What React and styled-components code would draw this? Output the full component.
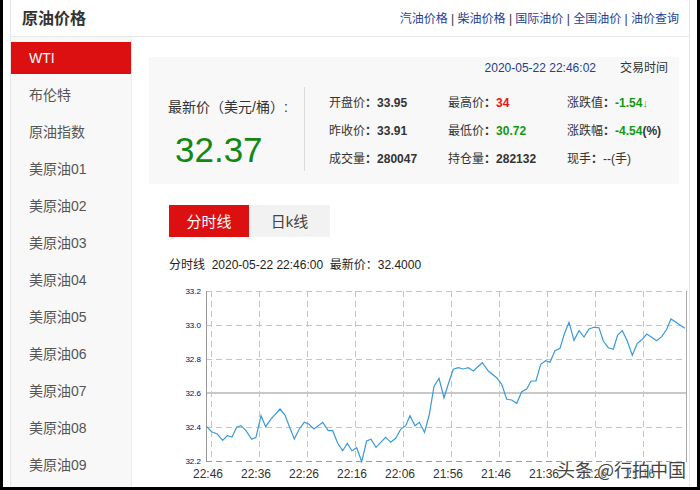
import React from 'react';
import styled, { createGlobalStyle } from 'styled-components';

const GlobalStyle = createGlobalStyle`
	html, body {
		margin: 0;
		padding: 0;
		background: #000;
	}
	body {
		font-family: "Liberation Sans", Arial, "Noto Sans CJK SC", sans-serif;
		color: #333;
	}
	* { box-sizing: border-box; }
`;

const Frame = styled.div`
	width: 700px;
	height: 490px;
	padding: 0 3px 3px 3px;
	background: #000;
`;

const Page = styled.div`
	height: 487px;
	background: #fff;
	padding: 0 7px;
	overflow: hidden;
`;

const Container = styled.div`
	width: 680px;
	height: 100%;
	border-left: 1px solid #e6e6e6;
	border-right: 1px solid #e6e6e6;
	display: flex;
	flex-direction: column;
`;

const Header = styled.div`
	height: 37px;
	border-bottom: 1px solid #e8e8e8;
	display: flex;
	align-items: center;
	justify-content: space-between;
	padding: 0 10px 2px 11px;
`;

const Title = styled.h2`
	margin: 0;
	font-size: 16px;
	font-weight: bold;
	color: #333;
`;

const Links = styled.div`
	font-size: 12px;
	color: #333;
	white-space: pre;
`;

const TopLink = styled.a`
	color: #1d3f95;
	text-decoration: none;
`;

const Body = styled.div`
	flex: 1;
	display: flex;
	min-height: 0;
`;

const Sidebar = styled.ul`
	list-style: none;
	margin: 0;
	padding: 5px 0 0;
	width: 121px;
	background: #f8f8f8;
	border-right: 1px solid #ececec;
	display: flex;
	flex-direction: column;
	gap: 5px;
`;

const SideItem = styled.li`
	height: 32px;
	line-height: 32px;
	padding-left: 18px;
	font-size: 14px;
	color: ${ props => props.$active ? '#fff' : '#555' };
	background: ${ props => props.$active ? '#dc1010' : 'transparent' };
`;

const Main = styled.div`
	flex: 1;
	display: flex;
	flex-direction: column;
	padding-top: 20px;
`;

const Summary = styled.div`
	margin: 0 10px 0 17px;
	height: 127px;
	background: #f8f8f8;
	padding: 3px 11px 13px 19px;
`;

const TimeRow = styled.div`
	display: flex;
	justify-content: flex-end;
	gap: 24px;
	font-size: 12px;
	line-height: 16px;
`;

const TimeStamp = styled.span`
	color: #1f3f8f;
`;

const SummaryBody = styled.div`
	margin-top: 11px;
	height: 84px;
	display: flex;
`;

const Latest = styled.div`
	width: 136px;
	display: flex;
	flex-direction: column;
	padding-top: 10px;
`;

const LatestLabel = styled.div`
	font-size: 14px;
	line-height: 20px;
	color: #333;
	white-space: nowrap;
`;

const LatestValue = styled.div`
	font-size: 35px;
	line-height: 40px;
	margin-top: 13px;
	padding-left: 7px;
	color: #118811;
`;

const Divider = styled.div`
	width: 1px;
	background: #dcdcdc;
`;

const Stats = styled.div`
	margin-left: 24px;
	display: grid;
	grid-template-columns: 119px 119px 1fr;
	grid-auto-rows: 28px;
	align-items: center;
	font-size: 12px;
`;

const Stat = styled.div`
	white-space: nowrap;
	color: #333;
`;

const StatValue = styled.b`
	color: ${ props => props.$tone === 'up' ? '#ee1111' : props.$tone === 'down' ? '#119911' : '#333' };
`;

const Arrow = styled.span`
	color: #33aa44;
	font-size: 11px;
`;

const Tabs = styled.div`
	display: flex;
	margin: 21px 0 0 37px;
`;

const Tab = styled.div`
	width: ${ props => props.$w }px;
	height: 32px;
	line-height: 33px;
	text-align: center;
	font-size: 15px;
	color: ${ props => props.$active ? '#fff' : '#444' };
	background: ${ props => props.$active ? '#dc1010' : '#f2f2f2' };
`;

const ChartTitle = styled.div`
	margin: 20px 0 0 37px;
	font-size: 12px;
	line-height: 16px;
	color: #222;
	white-space: pre;
`;

const ChartWrap = styled.div`
	position: relative;
	margin: 2px 0 0 37px;
	width: 520px;
	height: 212px;
`;

const Watermark = styled.div`
	position: absolute;
	left: 388px;
	top: 181px;
	font-size: 18px;
	color: #444;
	white-space: nowrap;
	text-shadow: 0 0 2px #fff, 0 0 2px #fff;
	font-family: "Noto Sans CJK SC", sans-serif;
`;

const sideItems = ['WTI', '布伦特', '原油指数', '美原油01', '美原油02', '美原油03', '美原油04', '美原油05', '美原油06', '美原油07', '美原油08', '美原油09'];

const topLinks = ['汽油价格', '柴油价格', '国际油价', '全国油价', '油价查询'];

const points = [
	[206.7, 426.7], [211.7, 431.7], [217.3, 434], [222.7, 440.3], [227.3, 435.7], [232, 437],
	[236.7, 427.3], [241, 425.7], [246, 430.7], [251.7, 439.3], [256, 437.3], [261, 415.7],
	[265.7, 426.7], [270.7, 419.3], [280, 409], [285, 415], [290, 428.3], [294.3, 439],
	[299.3, 429], [304.3, 422.3], [308.7, 424], [314, 429], [322.7, 422.3], [328.3, 430.7],
	[332.7, 430.7], [337.7, 443.3], [342.7, 450.7], [347.3, 443.3], [352, 450.7], [356.7, 447.7],
	[361.7, 461.7], [366.7, 441], [371, 439.3], [376, 447.3], [380.7, 442.3], [385.7, 437.3],
	[390.7, 442.3], [395.7, 438.3], [400.7, 429.3], [405.7, 425.7], [410, 415.7], [415, 425.7],
	[419.3, 422.3], [424.5, 432.3], [429.2, 415], [434, 386.5], [439, 378.3], [444, 397.7],
	[448.3, 384], [453.3, 369.3], [458.3, 367.7], [463.3, 369], [468.3, 367.7], [473.3, 371],
	[482.3, 362.7], [488.3, 371], [496.7, 377.7], [501.7, 384.3], [506.7, 399.3], [511.7, 400],
	[516.7, 403.3], [521.7, 391.7], [526.7, 389], [531, 381], [536, 381], [540.7, 364.3],
	[545.7, 360.7], [550, 362.3], [555, 350.7], [560, 348.3], [564.3, 334], [569, 322.3],
	[574, 340.3], [579, 330.7], [584, 337], [589, 329], [594, 327.3], [599, 327.7],
	[603.3, 341], [608.3, 347.7], [613.3, 349.3], [617.7, 335], [622.3, 330.7], [627.3, 341],
	[632.3, 355.3], [637.3, 343.3], [642.3, 339.3], [646.7, 334], [651.7, 337.3], [656.7, 340.7],
	[661.7, 336.7], [666.7, 329.3], [671, 319], [676, 322.3], [681, 325.7], [685, 328.3],
];

const yTicks = [
	{ y: 291, label: '33.2' },
	{ y: 325, label: '33.0' },
	{ y: 359, label: '32.8' },
	{ y: 393, label: '32.6' },
	{ y: 427, label: '32.4' },
	{ y: 461, label: '32.2' },
];

const xTicks = ['22:46', '22:36', '22:26', '22:16', '22:06', '21:56', '21:46', '21:36', '21:26', '21:16'];

const PLOT_L = 206;
const PLOT_R = 687;

const Chart = () => (
	<svg width="520" height="212" viewBox="169 275 520 212" style={{ display: 'block' }}>
		{yTicks.map(t => (
			t.y === 393 ? null : (
				<line key={t.y} x1={PLOT_L} x2={PLOT_R} y1={t.y + 0.5} y2={t.y + 0.5}
					stroke={t.y === 461 ? '#999' : '#c4c4c4'} strokeDasharray="6 4" />
			)
		))}
		{xTicks.map((t, i) => (
			<line key={t} x1={211.5 + i * 48} x2={211.5 + i * 48} y1={291} y2={461}
				stroke="#c4c4c4" strokeDasharray="6 4" />
		))}
		<line x1={PLOT_L} x2={PLOT_R} y1={393} y2={393} stroke="#c8c8c8" strokeWidth="2" />
		<line x1={PLOT_L + 0.5} x2={PLOT_L + 0.5} y1={291} y2={461} stroke="#999" />
		<line x1={PLOT_R - 0.5} x2={PLOT_R - 0.5} y1={291} y2={461} stroke="#aaa" />
		{yTicks.map(t => (
			<text key={t.label} x={201} y={t.y + 3} textAnchor="end" fontSize="8"
				fill="#000080" fontFamily="Liberation Sans, Arial, sans-serif">{t.label}</text>
		))}
		{xTicks.map((t, i) => (
			<text key={t} x={208 + i * 48} y={478} textAnchor="middle" fontSize="12"
				fill="#333" fontFamily="Liberation Sans, Arial, sans-serif">{t}</text>
		))}
		<polyline points={points.map(p => p.join(',')).join(' ')} fill="none" stroke="#3a9ad9" strokeWidth="1.2" />
	</svg>
);

const App = () => (
	<>
		<GlobalStyle />
		<Frame>
			<Page>
				<Container>
					<Header>
						<Title>原油价格</Title>
						<Links>
							{topLinks.map((l, i) => (
								<React.Fragment key={l}>
									{i > 0 && ' | '}
									<TopLink href="#">{l}</TopLink>
								</React.Fragment>
							))}
						</Links>
					</Header>
					<Body>
						<Sidebar>
							{sideItems.map((s, i) => (
								<SideItem key={s} $active={i === 0}>{s}</SideItem>
							))}
						</Sidebar>
						<Main>
							<Summary>
								<TimeRow>
									<TimeStamp>2020-05-22 22:46:02</TimeStamp>
									<span>交易时间</span>
								</TimeRow>
								<SummaryBody>
									<Latest>
										<LatestLabel>最新价（美元/桶）:</LatestLabel>
										<LatestValue>32.37</LatestValue>
									</Latest>
									<Divider />
									<Stats>
										<Stat>开盘价<b>：</b><StatValue>33.95</StatValue></Stat>
										<Stat>最高价<b>：</b><StatValue $tone="up">34</StatValue></Stat>
										<Stat>涨跌值<b>：</b><StatValue $tone="down">-1.54</StatValue><Arrow>↓</Arrow></Stat>
										<Stat>昨收价<b>：</b><StatValue>33.91</StatValue></Stat>
										<Stat>最低价<b>：</b><StatValue $tone="down">30.72</StatValue></Stat>
										<Stat>涨跌幅<b>：</b><StatValue $tone="down">-4.54</StatValue><b>(%)</b></Stat>
										<Stat>成交量<b>：</b><StatValue>280047</StatValue></Stat>
										<Stat>持仓量<b>：</b><StatValue>282132</StatValue></Stat>
										<Stat>现手<b>：</b>--(手)</Stat>
									</Stats>
								</SummaryBody>
							</Summary>
							<Tabs>
								<Tab $active $w={80}>分时线</Tab>
								<Tab $w={81}>日k线</Tab>
							</Tabs>
							<ChartTitle>分时线  2020-05-22 22:46:00  最新价：32.4000</ChartTitle>
							<ChartWrap>
								<Chart />
								<Watermark>头条 @行拍中国</Watermark>
							</ChartWrap>
						</Main>
					</Body>
				</Container>
			</Page>
		</Frame>
	</>
);

export default App;
